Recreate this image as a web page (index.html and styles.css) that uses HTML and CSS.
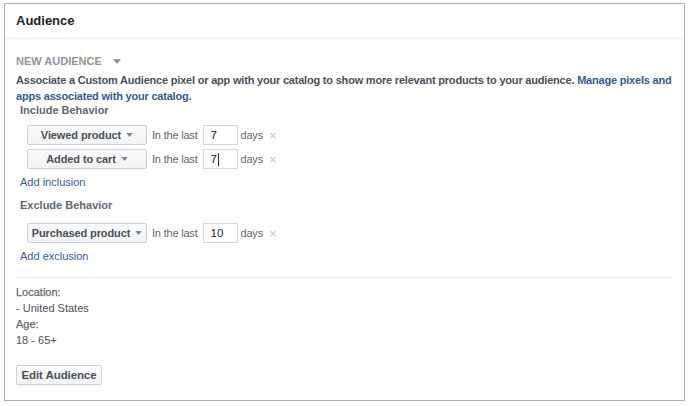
FILE: index.html
```html
<!DOCTYPE html>
<html>
<head>
<meta charset="utf-8">
<link rel="stylesheet" href="styles.css">
</head>
<body>
<div class="card">
  <div class="card-header">Audience</div>
  <div class="card-body">
    <div class="new-aud">NEW AUDIENCE <svg class="caret gray" width="8" height="5" viewBox="0 0 8 5"><path d="M0 0h8L4 5z"/></svg></div>
    <p class="desc">Associate a Custom Audience pixel or app with your catalog to show more relevant products to your audience. <a class="link">Manage pixels and</a><br><a class="link">apps associated with your catalog.</a></p>
    <div class="label include">Include Behavior</div>
    <div class="rows">
      <div class="row">
        <span class="btn sel">Viewed product <svg class="caret" width="7" height="4" viewBox="0 0 8 5"><path d="M0 0h8L4 5z"/></svg></span>
        <span class="txt last">In the last</span>
        <span class="inp">7</span>
        <span class="txt">days</span>
        <span class="x">×</span>
      </div>
      <div class="row">
        <span class="btn sel">Added to cart <svg class="caret" width="7" height="4" viewBox="0 0 8 5"><path d="M0 0h8L4 5z"/></svg></span>
        <span class="txt last">In the last</span>
        <span class="inp">7<span class="cursor"></span></span>
        <span class="txt">days</span>
        <span class="x">×</span>
      </div>
    </div>
    <div class="add add-inc">Add inclusion</div>
    <div class="label exclude">Exclude Behavior</div>
    <div class="rows rows-ex">
      <div class="row">
        <span class="btn sel">Purchased product <svg class="caret" width="7" height="4" viewBox="0 0 8 5"><path d="M0 0h8L4 5z"/></svg></span>
        <span class="txt last">In the last</span>
        <span class="inp">10</span>
        <span class="txt">days</span>
        <span class="x">×</span>
      </div>
    </div>
    <div class="add add-exc">Add exclusion</div>
    <div class="divider"></div>
    <div class="info-label">Location:</div>
    <div class="info-val">- United States</div>
    <div class="info-label">Age:</div>
    <div class="info-val">18 - 65+</div>
    <div class="btn edit">Edit Audience</div>
  </div>
</div>
</body>
</html>
```
FILE: styles.css
```css
* { box-sizing: border-box; }
html, body { background: #fff; }
body {
  margin: 0;
  padding: 3px 0 0 4px;
  font-family: "Liberation Sans", Arial, sans-serif;
  color: #4b4f56;
}
.card {
  width: 681px;
  height: 398px;
  border: 1px solid #a9afbc;
  box-shadow: 0 1px 0 #d4d7de;
  background: #fff;
}
.card-header {
  height: 35px;
  line-height: 33px;
  padding: 0 11px;
  font-size: 13px;
  font-weight: bold;
  color: #1d2129;
  border-bottom: 1px solid #e9ebee;
}
.card-body {
  padding: 14px 11px 0 11px;
}
.new-aud {
  line-height: 16px;
  font-size: 11px;
  font-weight: bold;
  color: #90949c;
  display: flex;
  align-items: center;
  gap: 11px;
}
.caret { fill: #7f8389; display: inline-block; flex: none; }
.caret.gray { fill: #90949c; }
.desc {
  margin: 3px 0 0 0;
  font-size: 11px;
  letter-spacing: -0.2px;
  font-weight: bold;
  line-height: 16px;
  color: #4b4f56;
}
.link { color: #365899; }
.label {
  font-size: 11px;
  font-weight: bold;
  line-height: 12px;
  color: #606770;
  padding-left: 4px;
}
.include { margin-top: 0; }
.exclude { margin-top: 10px; }
.rows {
  display: flex;
  flex-direction: column;
  gap: 4px;
  margin-top: 9px;
  padding-left: 11px;
}
.rows-ex { margin-top: 12px; }
.row {
  display: flex;
  align-items: center;
  height: 20px;
}
.btn {
  display: flex;
  align-items: center;
  justify-content: center;
  gap: 5px;
  height: 20px;
  border: 1px solid #ced0d4;
  border-radius: 2px;
  background: linear-gradient(#fafbfc, #f2f3f5);
  font-size: 11px;
  letter-spacing: -0.1px;
  font-weight: bold;
  color: #4b4f56;
  white-space: nowrap;
}
.sel { width: 120px; }
.txt {
  font-size: 11px;
  letter-spacing: -0.2px;
  color: #606770;
}
.txt.last { margin-left: 5px; }
.inp {
  display: flex;
  align-items: center;
  width: 35px;
  height: 20px;
  margin: 0 3px 0 5px;
  padding-left: 7px;
  border: 1px solid #d3d6db;
  font-size: 11.5px;
  color: #1d2129;
}
.cursor {
  display: inline-block;
  width: 1px;
  height: 13px;
  background: #1d2129;
  margin-left: 1px;
}
.x {
  margin-left: 6px;
  font-size: 13px;
  color: #bec2c9;
}
.add {
  font-size: 11px;
  line-height: 14px;
  color: #365899;
  padding-left: 4px;
}
.add-inc { margin-top: 6px; }
.add-exc { margin-top: 6px; }
.divider {
  margin-top: 14px;
  border-top: 1px solid #e9ebee;
}
.info-label {
  margin-top: 7px;
  font-size: 11px;
  line-height: 14px;
  color: #606770;
  -webkit-text-stroke: 0.25px #606770;
}
.info-label + .info-val { margin-top: 2px; }
.info-val + .info-label { margin-top: 2px; }
.info-val {
  font-size: 11px;
  line-height: 14px;
  color: #4b4f56;
}
.edit {
  margin-top: 18px;
  width: 86px;
  font-size: 11.5px;
}
```
